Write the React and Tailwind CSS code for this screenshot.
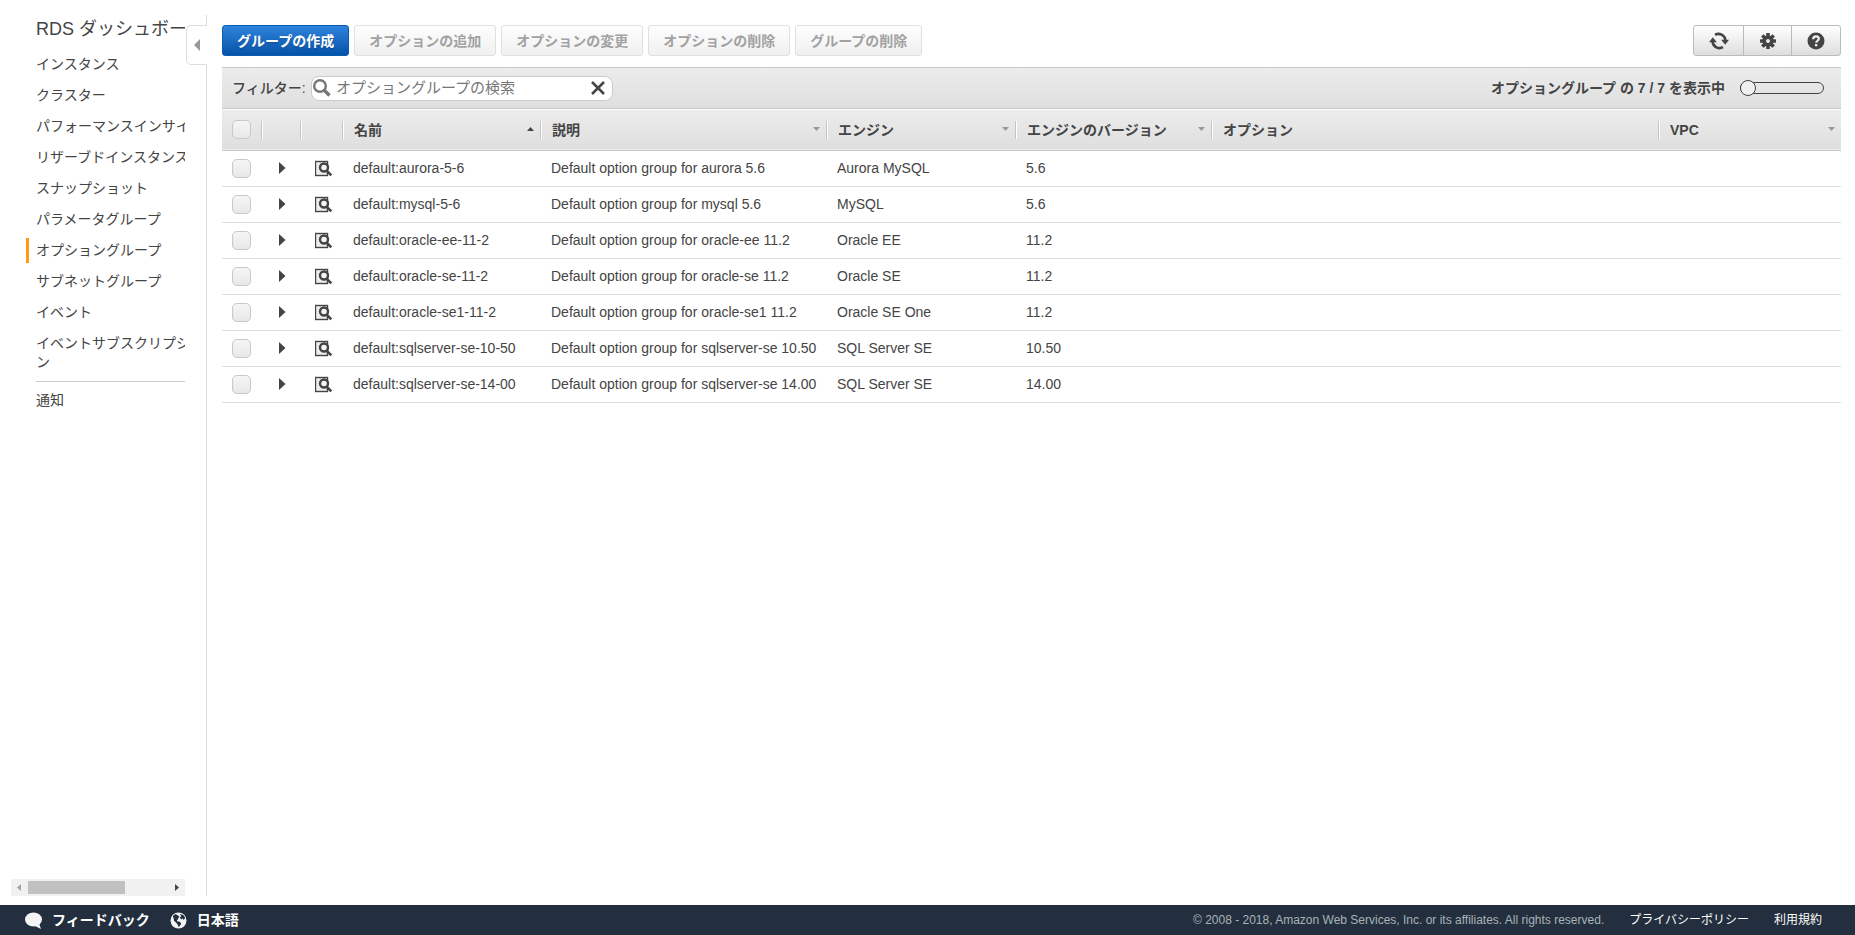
import React, { useState } from "react";

const navItems = [
  "インスタンス",
  "クラスター",
  "パフォーマンスインサイト",
  "リザーブドインスタンス",
  "スナップショット",
  "パラメータグループ",
  "オプショングループ",
  "サブネットグループ",
  "イベント",
  "イベントサブスクリプション",
];

const actions = ["オプションの追加", "オプションの変更", "オプションの削除", "グループの削除"];

const columns = [
  { label: "名前", sort: "asc" },
  { label: "説明", sort: "none" },
  { label: "エンジン", sort: "none" },
  { label: "エンジンのバージョン", sort: "none" },
  { label: "オプション" },
  { label: "VPC", sort: "none" },
];

const groups = [
  { name: "default:aurora-5-6", description: "Default option group for aurora 5.6", engine: "Aurora MySQL", version: "5.6" },
  { name: "default:mysql-5-6", description: "Default option group for mysql 5.6", engine: "MySQL", version: "5.6" },
  { name: "default:oracle-ee-11-2", description: "Default option group for oracle-ee 11.2", engine: "Oracle EE", version: "11.2" },
  { name: "default:oracle-se-11-2", description: "Default option group for oracle-se 11.2", engine: "Oracle SE", version: "11.2" },
  { name: "default:oracle-se1-11-2", description: "Default option group for oracle-se1 11.2", engine: "Oracle SE One", version: "11.2" },
  { name: "default:sqlserver-se-10-50", description: "Default option group for sqlserver-se 10.50", engine: "SQL Server SE", version: "10.50" },
  { name: "default:sqlserver-se-14-00", description: "Default option group for sqlserver-se 14.00", engine: "SQL Server SE", version: "14.00" },
];

const RefreshIcon = () => (
  <svg width="20" height="18" viewBox="0 0 20 18" aria-hidden="true">
    <path d="M6 2.800A7 7 0 0 1 16.400 8" fill="none" stroke="#444" strokeWidth="2.600" />
    <path d="M14 15.200A7 7 0 0 1 3.600 10" fill="none" stroke="#444" strokeWidth="2.600" />
    <path d="M12.200 7.800h7.800l-3.800 5z" fill="#444" />
    <path d="M0 10.200h7.800L3.800 5.200z" fill="#444" />
  </svg>
);

const GearIcon = () => (
  <svg width="16" height="16" viewBox="0 0 16 16" aria-hidden="true">
    <g fill="#444">
      <rect x="6.200" y="0" width="3.600" height="16" rx="0.500" />
      <rect x="6.200" y="0" width="3.600" height="16" rx="0.500" transform="rotate(45 8 8)" />
      <rect x="6.200" y="0" width="3.600" height="16" rx="0.500" transform="rotate(90 8 8)" />
      <rect x="6.200" y="0" width="3.600" height="16" rx="0.500" transform="rotate(135 8 8)" />
      <circle cx="8" cy="8" r="5.600" />
    </g>
    <circle cx="8" cy="8" r="2" fill="#eee" />
  </svg>
);

const HelpIcon = () => (
  <svg width="18" height="18" viewBox="0 0 18 18" aria-hidden="true">
    <circle cx="9" cy="9" r="8.500" fill="#444" />
    <path d="M6.200 7.200C6.200 5.300 7.400 4.400 9 4.400s2.800.9 2.800 2.400c0 1.900-2.600 2-2.600 4" fill="none" stroke="#f0f0f0" strokeWidth="2.200" />
    <rect x="8" y="12" width="2.300" height="2.300" fill="#f0f0f0" />
  </svg>
);

const SearchIcon = () => (
  <svg width="18" height="18" viewBox="0 0 18 18" aria-hidden="true">
    <circle cx="7" cy="7" r="5.800" fill="none" stroke="#777" strokeWidth="2.400" />
    <path d="M11.500 11.500l5 5" stroke="#777" strokeWidth="3.400" />
  </svg>
);

const DetailsIcon = () => (
  <svg width="17" height="17" viewBox="0 0 17 17" aria-hidden="true">
    <rect x="0.500" y="1.500" width="12" height="14" fill="#eee" stroke="#444" strokeWidth="1.400" />
    <circle cx="9" cy="7.500" r="4" fill="#f4f4f4" stroke="#444" strokeWidth="2.400" />
    <path d="M11.800 10.800l4.500 4.500" stroke="#444" strokeWidth="2.600" />
  </svg>
);

const SpeechIcon = () => (
  <svg width="17" height="17" viewBox="0 0 17 17" aria-hidden="true">
    <ellipse cx="8.500" cy="7.500" rx="8.500" ry="7" fill="#f4f4f4" />
    <path d="M8 13l8 4-2.500-7z" fill="#f4f4f4" />
  </svg>
);

const GlobeIcon = () => (
  <svg width="17" height="17" viewBox="0 0 17 17" aria-hidden="true">
    <circle cx="8.500" cy="8.500" r="8" fill="#f4f4f4" />
    <path d="M2.800 4L5.500 2l2.200 1.200L9.600 5 8 6.200 8.200 8 6.800 7.600l.4 1.600 2.600.6 1.400 1.600-1 2.200-1.600 1.400-1-2.400-1.600-2.200L4 8.800 3.600 6.200z" fill="#232f3e" />
    <path d="M9.800 2l3.400 1 2 2.800-1.400 2.200-1.200-1.400-1.600 1L10 5.400l1.200-1.200z" fill="#232f3e" />
  </svg>
);

const Checkbox = ({ label }) => (
  <input
    type="checkbox"
    aria-label={label}
    className="block appearance-none w-[19px] h-[19px] rounded-[5px] border border-[#c8c8c8] bg-linear-to-b from-[#f6f6f6] to-[#e8e8e8] checked:bg-[#146eb4]"
  />
);

const SortArrow = ({ direction }) => (
  <svg width="7" height="5" viewBox="0 0 7 5" aria-hidden="true" className="shrink-0">
    {direction === "asc" ? (
      <path d="M0 4h7L3.500 0z" fill="#444" />
    ) : (
      <path d="M0 0h7L3.500 4z" fill="#999" />
    )}
  </svg>
);

const Sidebar = () => (
  <aside className="relative w-[207px] shrink-0 mt-[15px] mb-[9px] border-r border-[#ddd] flex flex-col">
    <button
      type="button"
      aria-label="メニューを閉じる"
      className="absolute -right-px top-[10px] w-[21px] h-10 flex items-center justify-center bg-white border border-r-0 border-[#ddd] rounded-l-[5px]"
    >
      <svg width="6" height="12" viewBox="0 0 6 12" aria-hidden="true">
        <path d="M6 0v12L0 6z" fill="#999" />
      </svg>
    </button>

    <nav className="grow pt-px ml-[26px] mr-[21px] overflow-hidden">
      <a href="#" className="block w-[180px] pl-[10px] h-[27px] text-lg leading-[27px] whitespace-nowrap">
        RDS ダッシュボード
      </a>
      <ul className="mt-[9px] w-[180px] text-sm leading-[19px]">
        {navItems.map((item) => (
          <li key={item} className="py-[3px] mb-[6px]">
            <a
              href="#"
              className={
                item === "オプショングループ"
                  ? "block border-l-3 border-[#ff9913] pl-[7px] -my-[3px] py-[3px]"
                  : "block pl-[10px]"
              }
            >
              {item}
            </a>
          </li>
        ))}
      </ul>
      <hr className="ml-[10px] border-[#ccc]" />
      <a href="#" className="block pl-[10px] mt-[9px] text-sm leading-[19px]">
        通知
      </a>
    </nav>

    <div className="ml-[11px] mr-[21px] h-[17px] bg-[#f1f1f1] flex items-center px-[6px]" aria-hidden="true">
      <svg width="4" height="7" viewBox="0 0 4 7">
        <path d="M4 0v7L0 3.500z" fill="#a3a3a3" />
      </svg>
      <div className="ml-[7px] w-[97px] h-[13px] bg-[#c1c1c1]" />
      <svg width="4" height="7" viewBox="0 0 4 7" className="ml-auto">
        <path d="M0 0v7l4-3.500z" fill="#444" />
      </svg>
    </div>
  </aside>
);

const Toolbar = () => (
  <div className="flex justify-between">
    <div className="flex gap-[5px] text-sm font-bold">
      <button
        type="button"
        className="h-[31px] px-[14px] rounded-[3px] border border-[#0a5cb0] bg-linear-to-b from-[#2e83dc] to-[#0453a8] text-white text-shadow-sm"
      >
        グループの作成
      </button>
      {actions.map((action) => (
        <button
          key={action}
          type="button"
          disabled
          className="h-[31px] px-[14px] rounded-[3px] border border-[#e0e0e0] bg-linear-to-b from-[#fefefe] to-[#f0f0f0] text-[#a2a2a2]"
        >
          {action}
        </button>
      ))}
    </div>
    <div className="flex h-[31px] rounded-[3px] border border-[#bbb] bg-linear-to-b from-white to-[#dedede] divide-x divide-[#bbb]">
      <button type="button" aria-label="更新" className="w-[50px] flex items-center justify-center">
        <RefreshIcon />
      </button>
      <button type="button" aria-label="設定" className="w-12 flex items-center justify-center">
        <GearIcon />
      </button>
      <button type="button" aria-label="ヘルプ" className="w-12 flex items-center justify-center">
        <HelpIcon />
      </button>
    </div>
  </div>
);

const FilterBar = ({ search, setSearch }) => (
  <div className="mt-[11px] h-[42px] pl-[10px] pr-[17px] flex items-center justify-between border-y border-[#c8c8c8] bg-linear-to-b from-[#ececec] to-[#dfdfdf] text-sm font-bold">
    <div className="flex items-center">
      <label htmlFor="filter" className="w-[79px] font-medium whitespace-nowrap">
        フィルター:
      </label>
      <div className="flex items-center w-[302px] h-[25px] pl-px pr-[7px] rounded-lg border border-[#ccc] bg-white">
        <SearchIcon />
        <input
          id="filter"
          type="text"
          value={search}
          onChange={(e) => setSearch(e.target.value)}
          placeholder="オプショングループの検索"
          className="grow min-w-0 ml-[5px] text-[15px] leading-[22px] font-normal outline-none placeholder:text-[#777]"
        />
        <button type="button" aria-label="クリア" onClick={() => setSearch("")}>
          <svg width="14" height="14" viewBox="0 0 14 14" aria-hidden="true">
            <path d="M1 1l12 12M13 1L1 13" stroke="#444" strokeWidth="2.500" />
          </svg>
        </button>
      </div>
    </div>
    <div className="flex items-center gap-[15px]">
      <label htmlFor="pager">オプショングループ の 7 / 7 を表示中</label>
      <input
        id="pager"
        type="range"
        min="0"
        max="7"
        defaultValue="0"
        className="appearance-none w-[84px] h-3 rounded-full border border-[#444] [&::-webkit-slider-thumb]:appearance-none [&::-webkit-slider-thumb]:-ml-px [&::-webkit-slider-thumb]:w-4 [&::-webkit-slider-thumb]:h-4 [&::-webkit-slider-thumb]:rounded-full [&::-webkit-slider-thumb]:border [&::-webkit-slider-thumb]:border-[#444] [&::-webkit-slider-thumb]:bg-[#f0f0f0]"
      />
    </div>
  </div>
);

const GroupTable = () => (
  <table className="mt-px w-full table-fixed border-collapse text-sm text-left">
    <colgroup>
      <col className="w-[39px]" />
      <col className="w-[39px]" />
      <col className="w-[42px]" />
      <col className="w-[198px]" />
      <col className="w-[286px]" />
      <col className="w-[189px]" />
      <col className="w-[196px]" />
      <col />
      <col className="w-[183px]" />
    </colgroup>
    <thead>
      <tr className="h-10 border-b border-[#c8c8c8] bg-linear-to-b from-[#ececec] to-[#dfdfdf]">
        <th className="pl-[10px]">
          <Checkbox label="すべて選択" />
        </th>
        <th>
          <div className="h-[18px] border-l border-[#c4c4c4] shadow-[inset_1px_0_#fff]" />
        </th>
        <th>
          <div className="h-[18px] border-l border-[#c4c4c4] shadow-[inset_1px_0_#fff]" />
        </th>
        {columns.map((col) => (
          <th key={col.label} className="font-bold">
            <div className="h-[18px] pl-[11px] pr-[6px] flex items-center justify-between border-l border-[#c4c4c4] shadow-[inset_1px_0_#fff] leading-[18px] whitespace-nowrap">
              {col.label}
              {col.sort && <SortArrow direction={col.sort} />}
            </div>
          </th>
        ))}
      </tr>
    </thead>
    <tbody>
      {groups.map((group) => (
        <tr key={group.name} className="h-9 border-b border-[#ddd] whitespace-nowrap">
          <td className="pl-[10px]">
            <Checkbox label={group.name} />
          </td>
          <td className="pl-[18px]">
            <button type="button" aria-label="展開" className="block">
              <svg width="7" height="12" viewBox="0 0 7 12" aria-hidden="true">
                <path d="M0 0v12l6.500-6z" fill="#444" />
              </svg>
            </button>
          </td>
          <td className="pl-[15px]">
            <button type="button" aria-label="詳細" className="block">
              <DetailsIcon />
            </button>
          </td>
          <td className="pl-[11px]">{group.name}</td>
          <td className="pl-[11px]">{group.description}</td>
          <td className="pl-[11px]">{group.engine}</td>
          <td className="pl-[11px]">{group.version}</td>
          <td />
          <td />
        </tr>
      ))}
    </tbody>
  </table>
);

const Footer = () => (
  <footer className="h-[30px] shrink-0 pl-[25px] pr-[33px] flex items-center justify-between bg-[#232f3e] text-white">
    <div className="flex items-center gap-5 text-sm font-bold">
      <a href="#" className="flex items-center gap-[10px]">
        <SpeechIcon />
        フィードバック
      </a>
      <button type="button" className="flex items-center gap-[10px]">
        <GlobeIcon />
        日本語
      </button>
    </div>
    <div className="flex items-center gap-[25px] text-xs">
      <span className="text-[#a9b3b8]">
        © 2008 - 2018, Amazon Web Services, Inc. or its affiliates. All rights reserved.
      </span>
      <a href="#">プライバシーポリシー</a>
      <a href="#">利用規約</a>
    </div>
  </footer>
);

const App = () => {
  const [search, setSearch] = useState("");

  return (
    <div className="min-h-screen flex flex-col bg-white text-[#444] font-['Liberation_Sans','Noto_Sans_CJK_JP',sans-serif]">
      <div className="grow flex">
        <Sidebar />
        <main className="grow min-w-0 pt-[25px] pl-[15px] pr-[14px]">
          <Toolbar />
          <FilterBar search={search} setSearch={setSearch} />
          <GroupTable />
        </main>
      </div>
      <Footer />
    </div>
  );
};

export default App;
